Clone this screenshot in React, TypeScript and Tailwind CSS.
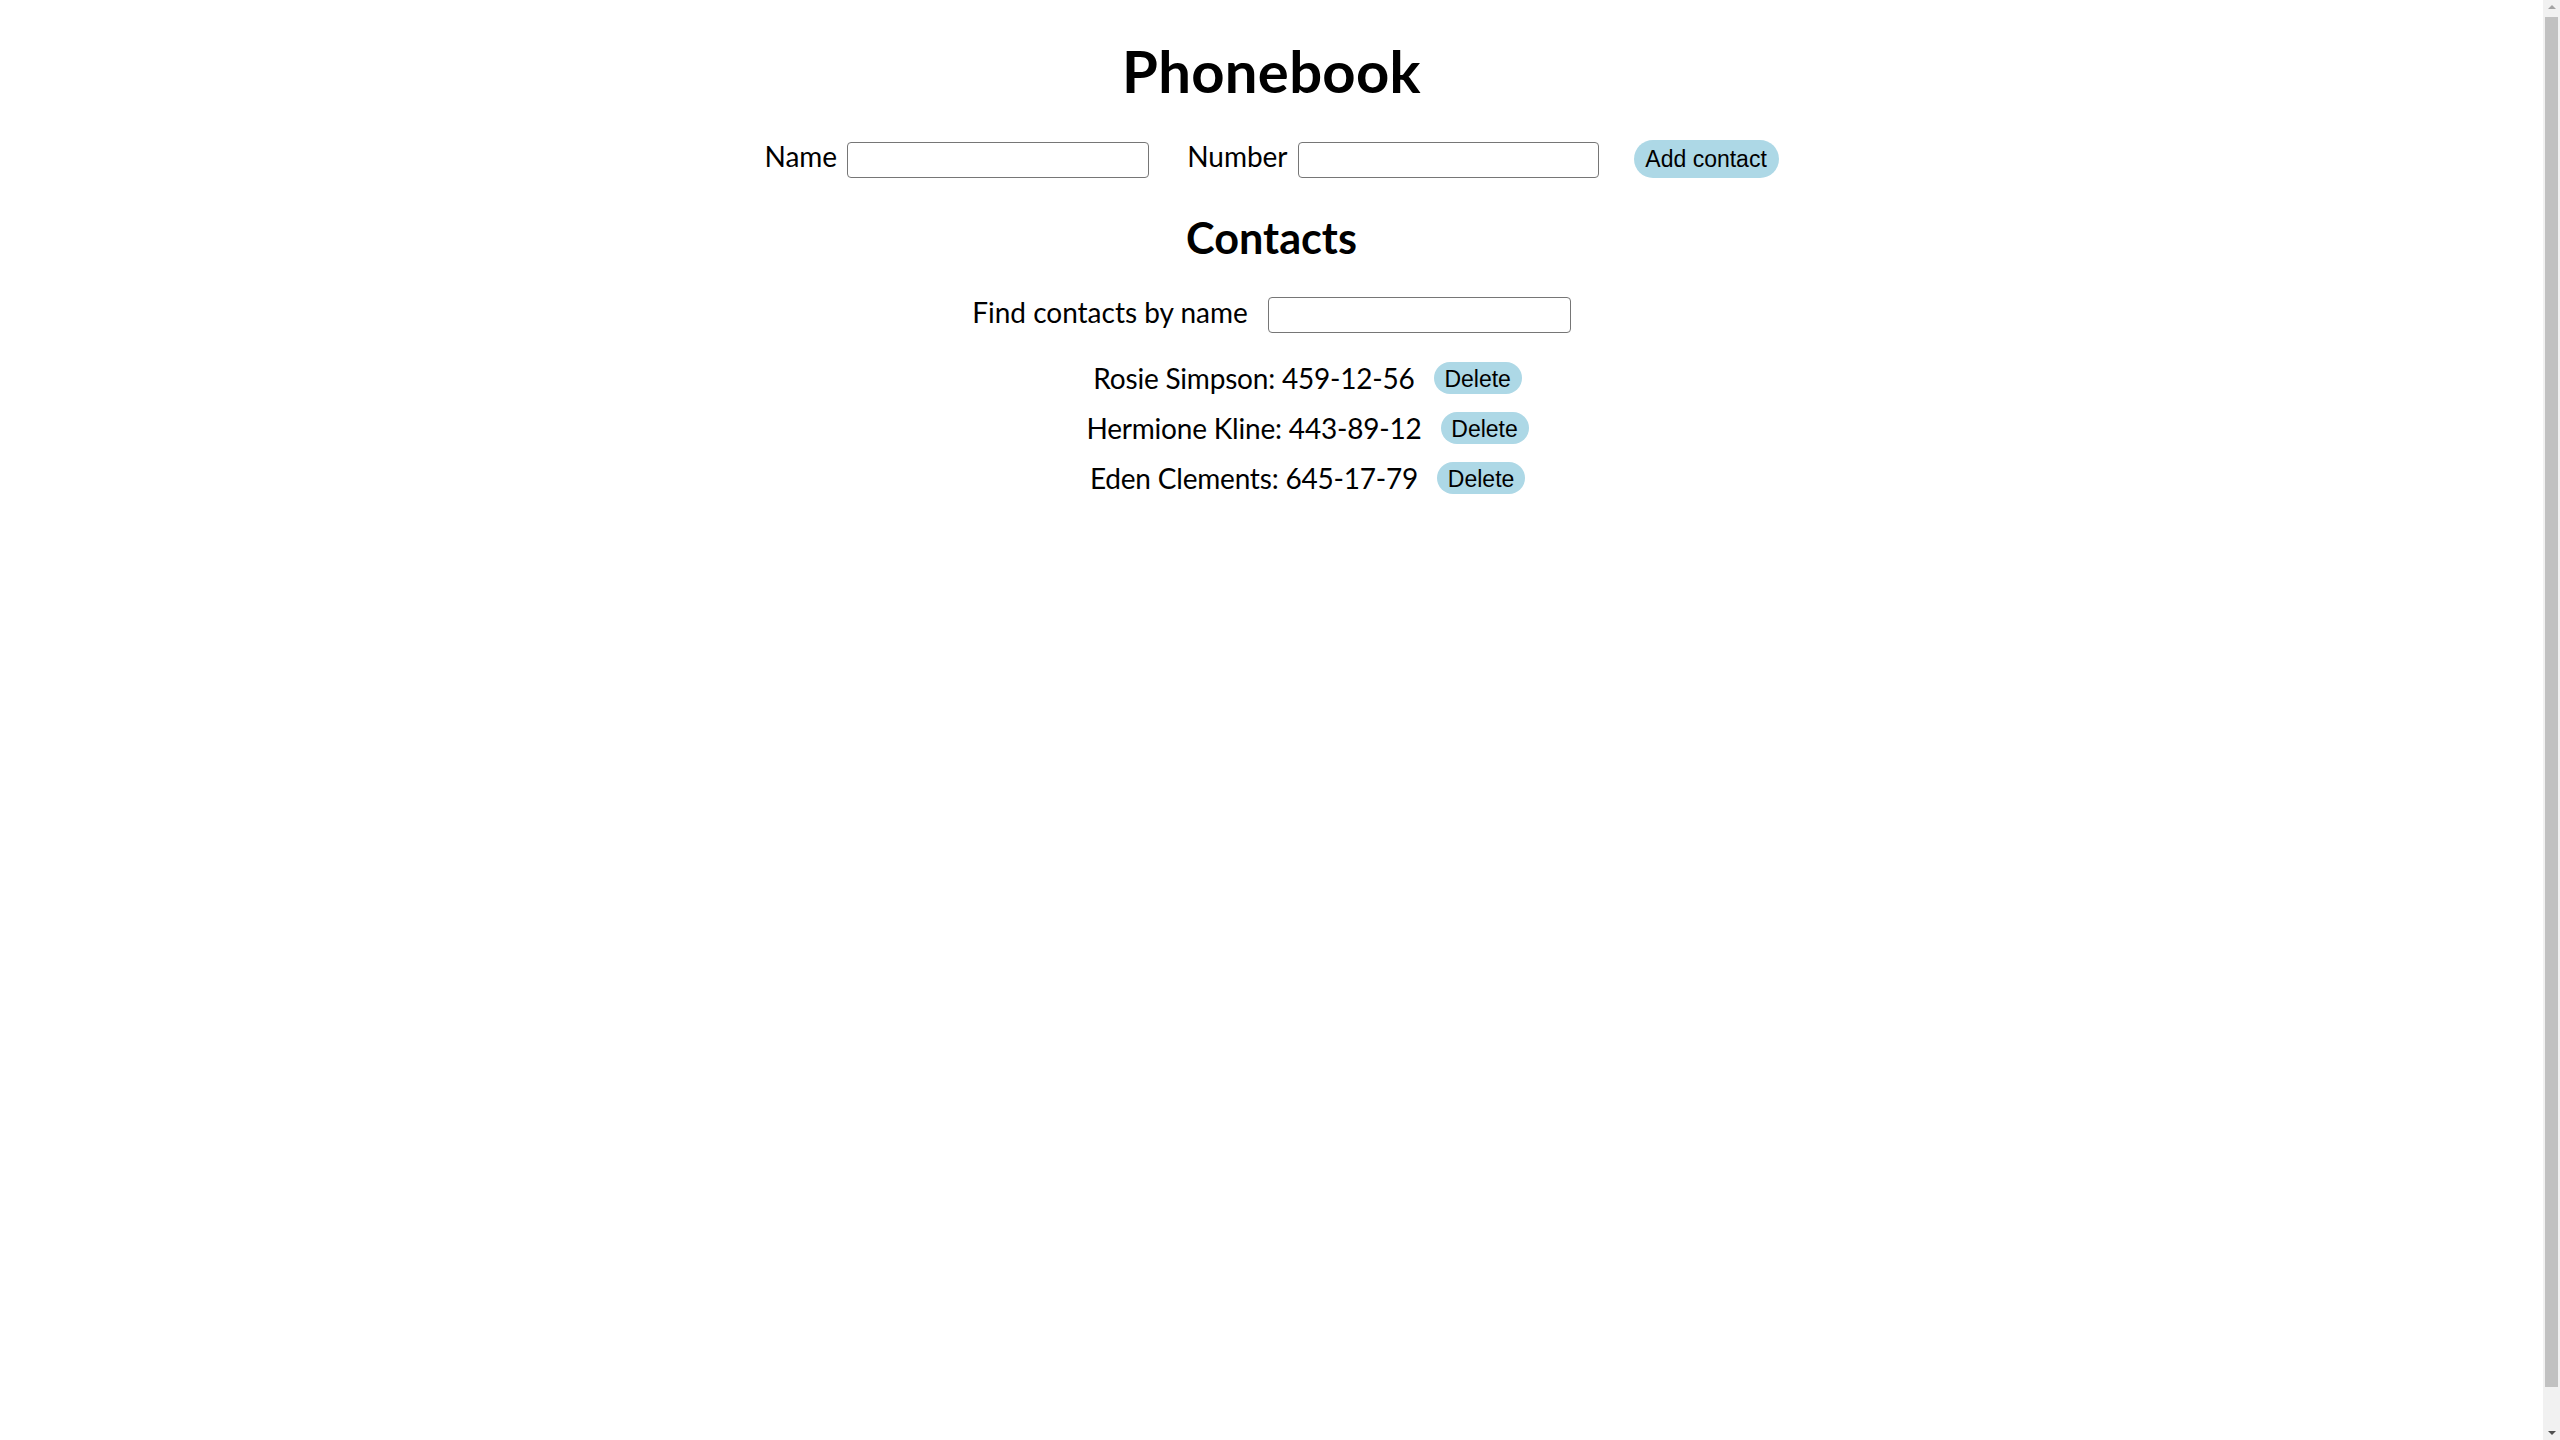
import React from 'react';

const contacts = [
  { id: 'id-1', name: 'Rosie Simpson', number: '459-12-56' },
  { id: 'id-2', name: 'Hermione Kline', number: '443-89-12' },
  { id: 'id-3', name: 'Eden Clements', number: '645-17-79' },
];

const App: React.FC = () => {
  return (
    <div className="flex h-screen w-full bg-white text-black">
      <main className="flex flex-1 flex-col items-center font-['Lato',sans-serif]">
        <h1 className="mt-[36px] text-[58px] font-bold leading-[70px] tracking-[0.3px]">Phonebook</h1>

        <form className="mt-[33px] flex items-end text-[28px]">
          <label className="flex items-end gap-[10px]">
            <span className="mb-[5px] leading-[34px]">Name</span>
            <input type="text" name="name" className="h-[36px] w-[302px] rounded-[4px] border border-[#767676]" />
          </label>
          <label className="ml-[38px] flex items-end gap-[10px]">
            <span className="mb-[5px] leading-[34px]">Number</span>
            <input type="tel" name="number" className="h-[36px] w-[301px] rounded-[4px] border border-[#767676]" />
          </label>
          <button type="button" className="ml-[35px] h-[38px] w-[145px] rounded-full bg-[#add8e6] font-['Liberation_Sans',sans-serif] text-[23px]">
            Add contact
          </button>
        </form>

        <h2 className="mt-[33px] text-[43.2px] font-bold leading-[52px]">Contacts</h2>

        <label className="mt-[32px] flex items-end gap-[20px] text-[28px]">
          <span className="mb-[4px] leading-[34px]">Find contacts by name</span>
          <input type="text" name="filter" className="h-[36px] w-[303px] rounded-[4px] border border-[#767676]" />
        </label>

        <ul className="mt-[29px] flex w-full flex-col gap-[18px] pl-[72px] text-[28px]">
          {contacts.map(c => (
            <li key={c.id} className="flex h-[32px] items-center justify-center gap-[19px]">
              <span className="leading-[32px] tracking-[-0.2px]">{c.name}: {c.number}</span>
              <button type="button" className="h-[32px] w-[88px] rounded-full bg-[#add8e6] font-['Liberation_Sans',sans-serif] text-[23px]">
                Delete
              </button>
            </li>
          ))}
        </ul>
      </main>

      {/* browser scrollbar */}
      <div className="flex w-[17px] flex-col items-center bg-[#f1f1f1]">
        <div className="mt-[5px] h-0 w-0 border-x-[4px] border-b-[4px] border-x-transparent border-b-[#a3a3a3]" />
        <div className="mt-[8px] h-[1370px] w-[13px] bg-[#c1c1c1]" />
        <div className="mt-auto mb-[5px] h-0 w-0 border-x-[4px] border-t-[4px] border-x-transparent border-t-[#505050]" />
      </div>
    </div>
  );
};

export default App;
